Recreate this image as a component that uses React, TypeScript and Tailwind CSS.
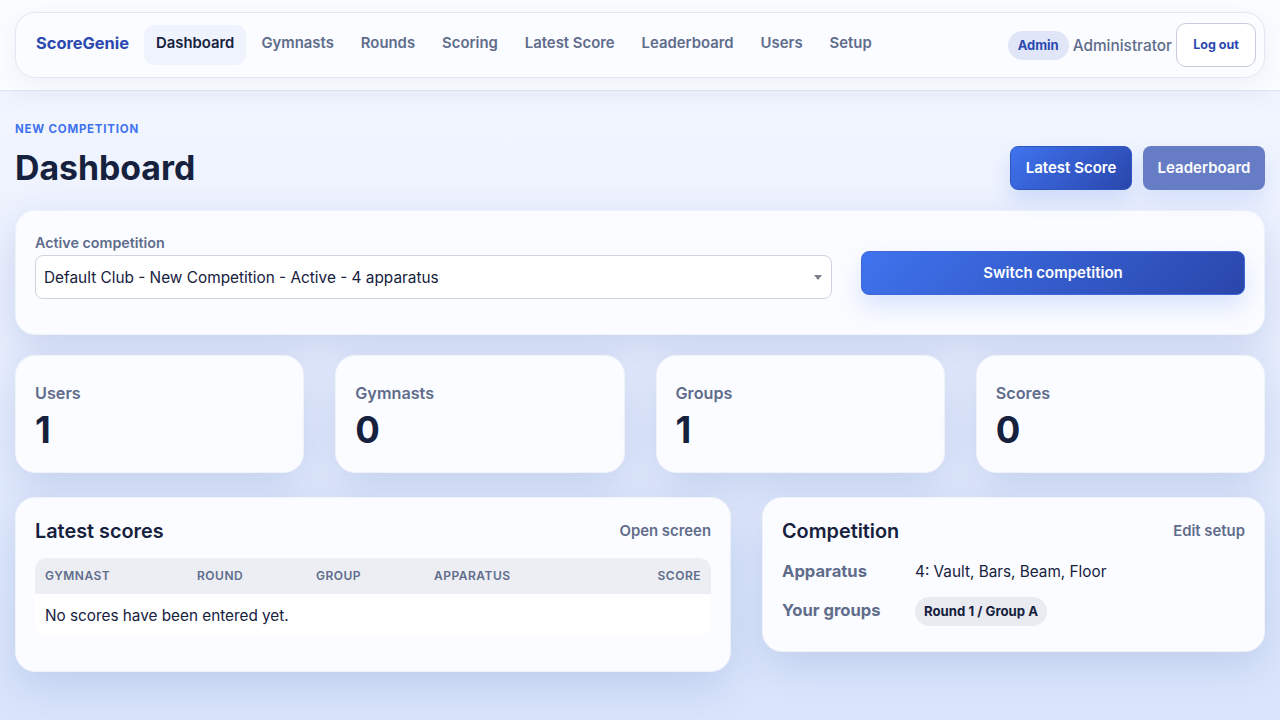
const navItems = ["Gymnasts", "Rounds", "Scoring", "Latest Score", "Leaderboard", "Users", "Setup"];
const stats = [
  ["Users", "1"],
  ["Gymnasts", "0"],
  ["Groups", "1"],
  ["Scores", "0"],
];

const card =
  "rounded-[20px] border border-[#f1f3fb] bg-[#fbfcff] shadow-[0_14px_40px_rgba(37,72,170,0.16)]";

export default function App() {
  return (
    <div className="h-[720px] overflow-hidden bg-gradient-to-b from-[#f6f8ff] to-[#d9e5fb] font-['Inter',sans-serif] text-[#16213e]">
      <header className="h-[91px] border-b border-[#dfe4f2] bg-[#fbfcff] px-[15px] pt-[12px] shadow-[0_8px_24px_rgba(37,72,170,0.04)]">
        <nav className="flex h-[66px] items-center justify-between rounded-[20px] border border-[#e2e7f3] bg-[#fafcff] pl-[20px] pr-[8px] shadow-[0_8px_24px_rgba(37,72,170,0.06)]">
          <div className="flex items-center">
            <a className="mr-[15px] pb-[4px] text-[16.4px] font-bold text-[#2b49b0]">ScoreGenie</a>
            <a className="flex h-[40px] items-center rounded-[10px] bg-[#eff3fd] px-[12px] pb-[4px] text-[14.88px] font-semibold text-[#16213e]">Dashboard</a>
            <div className="ml-[3px] flex gap-[3px]">
              {navItems.map((item) => (
                <a key={item} className="flex h-[40px] items-center px-[12px] pb-[4px] text-[14.88px] font-semibold text-[#5f6c8b]">{item}</a>
              ))}
            </div>
          </div>
          <div className="flex items-center">
            <span className="flex h-[29px] items-center rounded-full bg-[#e0e6f7] px-[10px] pt-[1px] text-[13px] font-bold text-[#2b49b0]">Admin</span>
            <span className="ml-[4px] pt-[2px] text-[15.36px] font-medium text-[#5f6c8b]">Administrator</span>
            <button className="ml-[4px] h-[44px] w-[80px] rounded-[10px] border border-[#c6ccdb] bg-white pt-[1px] text-[12.5px] font-bold text-[#2b49b0]">Log out</button>
          </div>
        </nav>
      </header>

      <main className="px-[15px]">
        <div className="flex items-end justify-between pt-[31px]">
          <div className="pb-[2px]">
            <p className="text-[11.5px] font-bold uppercase leading-[14px] tracking-[0.77px] text-[#3f73ee]">New competition</p>
            <h1 className="mt-[11px] text-[33.8px] font-bold leading-[42px] text-[#16213e]">Dashboard</h1>
          </div>
          <div className="flex gap-[11px] pb-[1px]">
            <button className="h-[44px] w-[122px] rounded-[8px] border border-[#2f55c4] bg-[linear-gradient(135deg,#3f73ee,#2a46ab)] text-[15px] font-semibold text-white shadow-[0_10px_20px_rgba(63,115,238,0.18)]">Latest Score</button>
            <button className="h-[44px] w-[122px] rounded-[8px] bg-[#667dc6] text-[15px] font-semibold text-white shadow-[0_10px_20px_rgba(63,115,238,0.14)]">Leaderboard</button>
          </div>
        </div>

        <section className={`mt-[19px] flex h-[125px] gap-[29px] px-[19px] pt-[23px] ${card}`}>
          <div className="w-[797px]">
            <label className="block text-[14.3px] font-semibold leading-[17px] text-[#5f6c8b]">Active competition</label>
            <div className="mt-[4px] flex h-[44px] items-center justify-between rounded-[8px] border border-[#ced3df] bg-white pl-[8px] pr-[9px] pt-[1px] text-[15.36px] text-[#16213e]">
              <span>Default Club - New Competition - Active - 4 apparatus</span>
              <svg width="8" height="5" viewBox="0 0 8 5"><path d="M0 0h8L4 5z" fill="#7a7f8c" /></svg>
            </div>
          </div>
          <button className="mt-[17px] h-[44px] flex-1 rounded-[8px] border border-[#3f67d8] bg-[linear-gradient(135deg,#3f73ee,#2a46ab)] text-[15px] font-semibold text-white shadow-[0_12px_24px_rgba(63,115,238,0.18)]">Switch competition</button>
        </section>

        <section className="mt-[20px] grid grid-cols-4 gap-[31px]">
          {stats.map(([label, value]) => (
            <div key={label} className={`h-[118px] px-[19px] pt-[27px] ${card}`}>
              <p className="text-[16.2px] font-semibold leading-[20px] text-[#5f6c8b]">{label}</p>
              <p className="mt-[5px] text-[36.5px] font-bold leading-[44px] text-[#16213e]">{value}</p>
            </div>
          ))}
        </section>

        <section className="mt-[24px] grid grid-cols-[716px_1fr] items-start gap-[31px]">
          <div className={`h-[175px] px-[19px] pt-[21px] ${card}`}>
            <div className="flex items-center justify-between">
              <h2 className="text-[19.84px] font-semibold leading-[24px] text-[#16213e]">Latest scores</h2>
              <a className="text-[14.9px] font-semibold text-[#5f6c8b]">Open screen</a>
            </div>
            <div className="mt-[15px] overflow-hidden rounded-[12px] bg-white">
              <div className="flex h-[36px] items-center bg-[#eceef3] px-[10px] text-[12px] font-semibold tracking-[0.5px] text-[#5f6c8b]">
                <span className="w-[152px]">GYMNAST</span>
                <span className="w-[119px]">ROUND</span>
                <span className="w-[118px]">GROUP</span>
                <span className="flex-1">APPARATUS</span>
                <span>SCORE</span>
              </div>
              <div className="flex h-[42px] items-center px-[10px] pt-[2px] text-[15.3px] text-[#16213e]">No scores have been entered yet.</div>
            </div>
          </div>
          <div className={`h-[155px] px-[19px] pt-[21px] ${card}`}>
            <div className="flex items-center justify-between">
              <h2 className="text-[19.84px] font-semibold leading-[24px] text-[#16213e]">Competition</h2>
              <a className="text-[14.9px] font-semibold text-[#5f6c8b]">Edit setup</a>
            </div>
            <div className="mt-[12px] flex h-[34px] items-center">
              <span className="w-[133px] pb-[2px] text-[16.6px] font-bold text-[#5f6c8b]">Apparatus</span>
              <span className="text-[15.3px] text-[#16213e]">4: Vault, Bars, Beam, Floor</span>
            </div>
            <div className="mt-[8px] flex items-center">
              <span className="w-[133px] pb-[3px] text-[16.6px] font-bold text-[#5f6c8b]">Your groups</span>
              <span className="flex h-[29px] items-center rounded-full bg-[#e9ebf0] px-[9px] text-[13.2px] font-bold text-[#16213e]">Round 1 / Group A</span>
            </div>
          </div>
        </section>
      </main>
    </div>
  );
}
